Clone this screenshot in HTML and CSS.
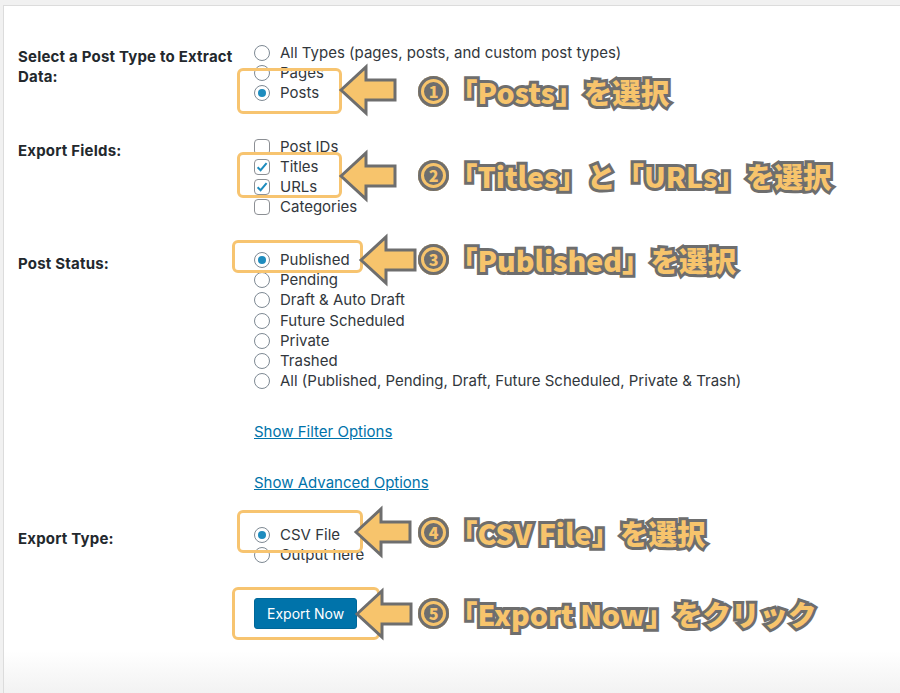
FILE: index.html
```html
<!DOCTYPE html>
<html lang="ja">
<head>
<meta charset="utf-8">
<title>Export</title>
<link rel="stylesheet" href="styles.css">
</head>
<body>
<div class="page">
  <div class="panel">
    <div class="row r1">
      <div class="label">Select a Post Type to Extract Data:</div>
      <div class="opts">
        <div class="opt"><span class="radio"></span>All Types (pages, posts, and custom post types)</div>
        <div class="opt"><span class="radio"></span>Pages</div>
        <div class="opt"><span class="radio on"></span>Posts</div>
      </div>
    </div>
    <div class="row r2">
      <div class="label">Export Fields:</div>
      <div class="opts">
        <div class="opt"><span class="check"></span>Post IDs</div>
        <div class="opt"><span class="check"><svg viewBox="0 0 16 16" width="16" height="16"><path d="M3.6 8.2 L6.6 11.2 L12.6 4.2" fill="none" stroke="#1e8cbe" stroke-width="2"/></svg></span>Titles</div>
        <div class="opt"><span class="check"><svg viewBox="0 0 16 16" width="16" height="16"><path d="M3.6 8.2 L6.6 11.2 L12.6 4.2" fill="none" stroke="#1e8cbe" stroke-width="2"/></svg></span>URLs</div>
        <div class="opt"><span class="check"></span>Categories</div>
      </div>
    </div>
    <div class="row r3">
      <div class="label">Post Status:</div>
      <div class="opts">
        <div class="opt"><span class="radio on"></span>Published</div>
        <div class="opt"><span class="radio"></span>Pending</div>
        <div class="opt"><span class="radio"></span>Draft &amp; Auto Draft</div>
        <div class="opt"><span class="radio"></span>Future Scheduled</div>
        <div class="opt"><span class="radio"></span>Private</div>
        <div class="opt"><span class="radio"></span>Trashed</div>
        <div class="opt"><span class="radio"></span>All (Published, Pending, Draft, Future Scheduled, Private &amp; Trash)</div>
      </div>
    </div>
    <div class="row r4">
      <div class="label"></div>
      <div class="opts"><a class="link" href="#">Show Filter Options</a></div>
    </div>
    <div class="row r5">
      <div class="label"></div>
      <div class="opts"><a class="link" href="#">Show Advanced Options</a></div>
    </div>
    <div class="row r6">
      <div class="label">Export Type:</div>
      <div class="opts">
        <div class="opt"><span class="radio on"></span>CSV File</div>
        <div class="opt"><span class="radio"></span>Output here</div>
      </div>
    </div>
    <div class="row r7">
      <div class="label"></div>
      <div class="opts"><button class="btn">Export Now</button></div>
    </div>
  </div>

  <div class="box b1"></div>
  <div class="box b2"></div>
  <div class="box b3"></div>
  <div class="box b4"></div>
  <div class="box b5"></div>

  <svg class="arrow w1" viewBox="0 0 58 50"><path d="M2 25 L27 2 L27 15 L56 15 L56 35 L27 35 L27 48 Z"/></svg>
  <svg class="arrow w2" viewBox="0 0 58 50"><path d="M2 25 L27 2 L27 15 L56 15 L56 35 L27 35 L27 48 Z"/></svg>
  <svg class="arrow w3" viewBox="0 0 58 50"><path d="M2 25 L27 2 L27 15 L56 15 L56 35 L27 35 L27 48 Z"/></svg>
  <svg class="arrow w4" viewBox="0 0 58 50"><path d="M2 25 L27 2 L27 15 L56 15 L56 35 L27 35 L27 48 Z"/></svg>
  <svg class="arrow w5" viewBox="0 0 58 50"><path d="M2 25 L27 2 L27 15 L56 15 L56 35 L27 35 L27 48 Z"/></svg>

  <div class="note n1"><span class="circ">1</span><span class="jt">「Posts」を選択</span></div>
  <div class="note n2"><span class="circ">2</span><span class="jt">「Titles」と「URLs」を選択</span></div>
  <div class="note n3"><span class="circ">3</span><span class="jt">「Published」を選択</span></div>
  <div class="note n4"><span class="circ">4</span><span class="jt">「CSV File」を選択</span></div>
  <div class="note n5"><span class="circ">5</span><span class="jt">「Export Now」をクリック</span></div>
</div>
</body>
</html>
```

FILE: styles.css
```css
* { box-sizing: border-box; }
html, body { margin: 0; padding: 0; }
body {
  background: #f1f1f1;
  font-family: Inter, "Liberation Sans", sans-serif;
  font-size: 15px;
  color: #32373c;
}
.page {
  position: relative;
  width: 900px;
  height: 693px;
  padding: 5px 0 0 3px;
  overflow: hidden;
}
.panel {
  height: 688px;
  background: linear-gradient(to bottom, #fff 0, #fff 645px, #f2f2f2 688px);
  border-top: 1px solid #dcdcdc;
  border-left: 1px solid #dcdcdc;
  padding: 37px 0 0 14px;
}
.row {
  display: grid;
  grid-template-columns: 236px 1fr;
}
.label {
  font-weight: 700;
  color: #23282d;
  line-height: 20px;
  padding: 4px 0 0 0;
  letter-spacing: 0.2px;
}
.opt {
  display: flex;
  align-items: center;
  height: 20px;
  line-height: 20px;
  white-space: nowrap;
}
.r2 { margin-top: 34px; }
.r3 { margin-top: 33px; }
.r3 .opt { height: 20.2px; }
.r4 { margin-top: 31px; }
.r5 { margin-top: 31px; }
.r6 { margin-top: 32px; }
.r7 { margin-top: 33px; }
.link {
  display: block;
  line-height: 20px;
  color: #0073aa;
  text-decoration: underline;
}
.radio {
  width: 16px;
  height: 16px;
  border: 1px solid #7e8993;
  border-radius: 50%;
  margin-right: 10px;
  flex: none;
  display: flex;
  align-items: center;
  justify-content: center;
  background: #fff;
}
.radio.on::after {
  content: "";
  width: 8px;
  height: 8px;
  border-radius: 50%;
  background: #1e8cbe;
}
.check {
  width: 16px;
  height: 16px;
  border: 1px solid #8c8f94;
  border-radius: 4px;
  margin-right: 10px;
  flex: none;
  position: relative;
  background: #fff;
}
.check svg { position: absolute; left: -1px; top: -1px; }
.btn {
  height: 31px;
  padding: 0 12px;
  background: #0073aa;
  color: #fff;
  border: 1px solid #006799;
  border-radius: 3px;
  font-family: Inter, "Liberation Sans", sans-serif;
  font-size: 14px;
}

/* annotation overlays */
.box {
  position: absolute;
  border: 3px solid #f7c470;
  border-radius: 6px;
}
.b1 { left: 237px; top: 68px; width: 105px; height: 46px; }
.b2 { left: 237px; top: 152px; width: 105px; height: 46px; }
.b3 { left: 232px; top: 240px; width: 131px; height: 33px; }
.b4 { left: 237px; top: 510px; width: 126px; height: 43px; }
.b5 { left: 232px; top: 587px; width: 148px; height: 53px; }

.arrow {
  position: absolute;
  width: 58px;
  height: 50px;
  overflow: visible;
}
.arrow path {
  fill: #f7c46c;
  stroke: #6e6e6e;
  stroke-width: 3;
  stroke-linejoin: miter;
}
.w1 { left: 339px; top: 65px; }
.w2 { left: 339px; top: 151px; }
.w3 { left: 359px; top: 235px; }
.w4 { left: 354px; top: 507px; }
.w5 { left: 355px; top: 589px; }

.note {
  position: absolute;
  left: 418px;
  height: 36px;
  display: flex;
  align-items: center;
  white-space: nowrap;
}
.n1 { top: 73px; }
.n2 { top: 157px; }
.n3 { top: 241px; }
.n4 { top: 514px; }
.n5 { top: 595px; }
.circ {
  width: 31px;
  height: 31px;
  border-radius: 50%;
  background: #6e6e6e;
  box-shadow: inset 0 0 0 3px #6e6e6e, inset 0 0 0 6px #f7c46c;
  color: #f7c46c;
  font-family: "Noto Sans CJK JP", sans-serif;
  font-weight: 900;
  font-size: 16px;
  display: flex;
  align-items: center;
  justify-content: center;
  flex: none;
}
.jt {
  font-family: "Noto Sans CJK JP", sans-serif;
  font-weight: 900;
  font-size: 28.5px;
  color: #f7c46c;
  -webkit-text-stroke: 6px #6e6e6e;
  paint-order: stroke fill;
}
```
